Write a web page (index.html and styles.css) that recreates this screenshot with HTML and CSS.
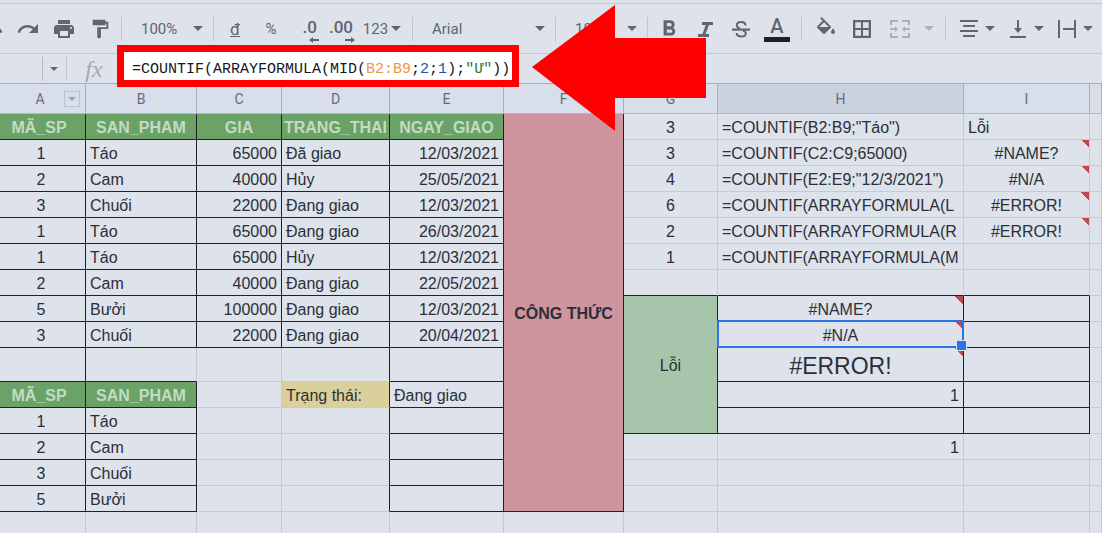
FILE: index.html
```html
<!DOCTYPE html>
<html lang="vi">

<head>
    <meta charset="UTF-8">
    <meta name="viewport" content="width=device-width, initial-scale=1.0">
    <title>COUNTIF</title>
    <link rel="stylesheet" href="styles.css">
</head>

<body>
    <div class="app">
        <!-- Toolbar -->
        <div class="toolbar">
            <button type="button" class="tool tool-cut" aria-label="Undo">
                <svg width="24" height="24" viewBox="0 0 24 24"><path d="M5.6 10.6C7.45 8.99 9.85 8 12.5 8c4.65 0 8.58 3.03 9.96 7.22L20.1 16c-1.05-3.19-4.05-5.5-7.6-5.5-1.95 0-3.73.72-5.12 1.88L11 16H2V7l3.6 3.6z"/></svg>
            </button>
            <button type="button" class="tool" aria-label="Redo">
                <svg width="24" height="24" viewBox="0 0 24 24"><path d="M18.4 10.6C16.55 8.99 14.15 8 11.5 8c-4.65 0-8.58 3.03-9.96 7.22L3.9 16c1.05-3.19 4.05-5.5 7.6-5.5 1.95 0 3.73.72 5.12 1.88L13 16h9V7l-3.6 3.6z"/></svg>
            </button>
            <button type="button" class="tool" aria-label="Print">
                <svg width="24" height="24" viewBox="0 0 24 24"><path d="M19 8H5c-1.66 0-3 1.34-3 3v6h4v4h12v-4h4v-6c0-1.66-1.34-3-3-3zm-3 11H8v-5h8v5zm3-7c-.55 0-1-.45-1-1s.45-1 1-1 1 .45 1 1-.45 1-1 1zm-1-9H6v4h12V3z"/></svg>
            </button>
            <button type="button" class="tool" aria-label="Paint format">
                <svg width="22" height="22" viewBox="0 0 24 24"><path d="M18 4V3c0-.55-.45-1-1-1H5c-.55 0-1 .45-1 1v4c0 .55.45 1 1 1h12c.55 0 1-.45 1-1V6h1v4H9v11c0 .55.45 1 1 1h2c.55 0 1-.45 1-1v-9h8V4h-3z"/></svg>
            </button>
            <span class="sep"></span>
            <div class="dropdown">
                <select aria-label="Zoom">
                    <option>100%</option>
                </select>
            </div>
            <span class="sep"></span>
            <button type="button" class="tool currency"><u>đ</u></button>
            <button type="button" class="tool">%</button>
            <button type="button" class="tool decimal">
                .0
                <svg width="10" height="6" viewBox="0 0 10 6"><path d="M4 0v2h6v2H4v2L0 3z"/></svg>
            </button>
            <button type="button" class="tool decimal">
                .00
                <svg width="10" height="6" viewBox="0 0 10 6"><path d="M6 0v2H0v2h6v2l4-3z"/></svg>
            </button>
            <button type="button" class="tool format caret">123</button>
            <span class="sep"></span>
            <div class="dropdown dropdown-font">
                <select aria-label="Font">
                    <option>Arial</option>
                </select>
            </div>
            <span class="sep"></span>
            <div class="dropdown">
                <select aria-label="Font size">
                    <option>10</option>
                </select>
            </div>
            <span class="sep"></span>
            <button type="button" class="tool" aria-label="Bold">
                <svg width="26" height="26" viewBox="0 0 24 24"><path d="M15.6 10.79c.97-.67 1.65-1.77 1.65-2.79 0-2.26-1.75-4-4-4H7v14h7.04c2.09 0 3.71-1.7 3.71-3.79 0-1.52-.86-2.82-2.15-3.42zM10 6.5h3c.83 0 1.5.67 1.5 1.5s-.67 1.5-1.5 1.5h-3v-3zm3.5 9H10v-3h3.5c.83 0 1.5.67 1.5 1.5s-.67 1.5-1.5 1.5z"/></svg>
            </button>
            <button type="button" class="tool" aria-label="Italic">
                <svg width="24" height="24" viewBox="0 0 24 24"><path d="M9 5v3h3.7L9.4 17H5v3h11v-3h-3.4L15.9 8H20V5z"/></svg>
            </button>
            <button type="button" class="tool" aria-label="Strikethrough">
                <svg width="24" height="24" viewBox="0 0 24 24"><path class="stroke" d="M16.5 8.5C16.5 6.3 14.6 5 12.2 5S7.8 6.3 7.8 8.3c0 1.7 1.2 2.6 3.2 3.3M14 13.5c1.9.6 2.8 1.5 2.8 2.9 0 2-1.9 3.1-4.4 3.1S7.6 18.2 7.600 16"/><path d="M3 11.5h18v2.200H3z"/></svg>
            </button>
            <button type="button" class="tool text-color">A</button>
            <span class="sep sep-wide"></span>
            <button type="button" class="tool" aria-label="Fill color">
                <svg width="24" height="24" viewBox="0 0 24 24"><path d="M16.56 8.94L7.62 0 6.21 1.41l2.38 2.38-5.15 5.15c-.59.59-.59 1.54 0 2.12l5.5 5.5c.29.29.68.44 1.06.44s.77-.15 1.06-.44l5.5-5.5c.59-.58.59-1.53 0-2.12zM5.21 10L10 5.21 14.79 10H5.21zM19 11.5s-2 2.17-2 3.5c0 1.1.9 2 2 2s2-.9 2-2c0-1.33-2-3.5-2-3.5z"/></svg>
            </button>
            <button type="button" class="tool" aria-label="Borders">
                <svg width="24" height="24" viewBox="0 0 24 24"><path fill-rule="evenodd" d="M3 3h18v18H3zM5.3 5.3V11H11V5.3zM13 5.3V11h5.7V5.3zM5.3 13v5.7H11V13zM13 13v5.7h5.7V13z"/></svg>
            </button>
            <button type="button" class="tool merge caret" aria-label="Merge cells">
                <svg width="20" height="20" viewBox="0 0 20 20"><path d="M0 1h8v2H2v3H0zM12 1h8v5h-2V3h-6zM0 14h2v3h6v2H0zM18 14h2v5h-8v-2h6zM0 9h5V7l3 3-3 3v-2H0zM20 9h-5V7l-3 3 3 3v-2h5z"/></svg>
            </button>
            <span class="sep sep-wide"></span>
            <button type="button" class="tool menu caret" aria-label="Horizontal align">
                <svg width="20" height="20" viewBox="0 0 20 20"><path d="M1 1h18v2H1zM4 6h12v2H4zM1 11h18v2H1zM4 16h12v2H4z"/></svg>
            </button>
            <button type="button" class="tool menu caret" aria-label="Vertical align">
                <svg width="20" height="20" viewBox="0 0 20 20"><path d="M9 1h2v8h3l-4 5-4-5h3zM2 17h16v2H2z"/></svg>
            </button>
            <button type="button" class="tool menu caret" aria-label="Text wrapping">
                <svg width="20" height="20" viewBox="0 0 20 20"><path d="M1 1h2v18H1zM17 1h2v18h-2zM6 9h11v2H6z"/></svg>
            </button>
        </div>

        <!-- Formula bar -->
        <div class="formula-bar">
            <button type="button" class="name-box caret" aria-label="Name box"></button>
            <span class="fx">fx</span>
            <div class="formula">
                <code>=COUNTIF(ARRAYFORMULA(MID(<span class="range">B2:B9</span>;<span class="number">2</span>;<span class="number">1</span>);<span class="string">"Ư"</span>))</code>
            </div>
            <svg class="arrow" width="174" height="126" viewBox="0 0 174 126"><path d="M0 62L83 0v33h91v60H83v33z"/></svg>
        </div>

        <!-- Sheet -->
        <table class="sheet">
            <colgroup>
                <col class="col-a">
                <col class="col-b">
                <col class="col-c">
                <col class="col-d">
                <col class="col-e">
                <col class="col-f">
                <col class="col-g">
                <col class="col-h">
                <col class="col-i">
                <col>
            </colgroup>
            <thead>
                <tr>
                    <th>
                        <div class="col-head">
                            <span>A</span>
                            <button type="button" class="filter caret" aria-label="Column A menu"></button>
                        </div>
                    </th>
                    <th>B</th>
                    <th>C</th>
                    <th>D</th>
                    <th>E</th>
                    <th>F</th>
                    <th>G</th>
                    <th class="active">H</th>
                    <th>I</th>
                    <th></th>
                </tr>
            </thead>
            <tbody>
                <tr>
                    <td class="title box">MÃ_SP</td>
                    <td class="title box">SAN_PHAM</td>
                    <td class="title box">GIA</td>
                    <td class="title box">TRANG_THAI</td>
                    <td class="title box">NGAY_GIAO</td>
                    <td class="banner box" rowspan="15">CÔNG THỨC</td>
                    <td class="center">3</td>
                    <td>=COUNTIF(B2:B9;"Táo")</td>
                    <td>Lỗi</td>
                    <td></td>
                </tr>
                <tr>
                    <td class="center box">1</td>
                    <td class="box">Táo</td>
                    <td class="right box">65000</td>
                    <td class="box">Đã giao</td>
                    <td class="right box">12/03/2021</td>
                    <td class="center">3</td>
                    <td>=COUNTIF(C2:C9;65000)</td>
                    <td class="center error">#NAME?</td>
                    <td></td>
                </tr>
                <tr>
                    <td class="center box">2</td>
                    <td class="box">Cam</td>
                    <td class="right box">40000</td>
                    <td class="box">Hủy</td>
                    <td class="right box">25/05/2021</td>
                    <td class="center">4</td>
                    <td>=COUNTIF(E2:E9;"12/3/2021")</td>
                    <td class="center error">#N/A</td>
                    <td></td>
                </tr>
                <tr>
                    <td class="center box">3</td>
                    <td class="box">Chuối</td>
                    <td class="right box">22000</td>
                    <td class="box">Đang giao</td>
                    <td class="right box">12/03/2021</td>
                    <td class="center">6</td>
                    <td>=COUNTIF(ARRAYFORMULA(L</td>
                    <td class="center error">#ERROR!</td>
                    <td></td>
                </tr>
                <tr>
                    <td class="center box">1</td>
                    <td class="box">Táo</td>
                    <td class="right box">65000</td>
                    <td class="box">Đang giao</td>
                    <td class="right box">26/03/2021</td>
                    <td class="center">2</td>
                    <td>=COUNTIF(ARRAYFORMULA(R</td>
                    <td class="center error">#ERROR!</td>
                    <td></td>
                </tr>
                <tr>
                    <td class="center box">1</td>
                    <td class="box">Táo</td>
                    <td class="right box">65000</td>
                    <td class="box">Hủy</td>
                    <td class="right box">12/03/2021</td>
                    <td class="center">1</td>
                    <td>=COUNTIF(ARRAYFORMULA(M</td>
                    <td></td>
                    <td></td>
                </tr>
                <tr>
                    <td class="center box">2</td>
                    <td class="box">Cam</td>
                    <td class="right box">40000</td>
                    <td class="box">Đang giao</td>
                    <td class="right box">22/05/2021</td>
                    <td class="line-bottom"></td>
                    <td class="line-bottom"></td>
                    <td class="line-bottom"></td>
                    <td></td>
                </tr>
                <tr>
                    <td class="center box">5</td>
                    <td class="box">Bưởi</td>
                    <td class="right box">100000</td>
                    <td class="box">Đang giao</td>
                    <td class="right box">12/03/2021</td>
                    <td class="group box" rowspan="5">Lỗi</td>
                    <td class="center error box">#NAME?</td>
                    <td class="box"></td>
                    <td></td>
                </tr>
                <tr>
                    <td class="center box">3</td>
                    <td class="box">Chuối</td>
                    <td class="right box">22000</td>
                    <td class="box">Đang giao</td>
                    <td class="right box">20/04/2021</td>
                    <td class="center error box selected">#N/A</td>
                    <td class="box"></td>
                    <td></td>
                </tr>
                <tr class="tall">
                    <td class="box"></td>
                    <td class="line-bottom"></td>
                    <td></td>
                    <td class="line-right"></td>
                    <td class="box"></td>
                    <td class="center error box large">#ERROR!</td>
                    <td class="box"></td>
                    <td></td>
                </tr>
                <tr>
                    <td class="title box">MÃ_SP</td>
                    <td class="title box">SAN_PHAM</td>
                    <td></td>
                    <td class="status line-right">Trạng thái:</td>
                    <td class="box">Đang giao</td>
                    <td class="right box">1</td>
                    <td class="box"></td>
                    <td></td>
                </tr>
                <tr>
                    <td class="center box">1</td>
                    <td class="box">Táo</td>
                    <td></td>
                    <td class="line-right"></td>
                    <td class="box"></td>
                    <td class="box"></td>
                    <td class="box"></td>
                    <td></td>
                </tr>
                <tr>
                    <td class="center box">2</td>
                    <td class="box">Cam</td>
                    <td></td>
                    <td class="line-right"></td>
                    <td class="box"></td>
                    <td></td>
                    <td class="right">1</td>
                    <td></td>
                    <td></td>
                </tr>
                <tr>
                    <td class="center box">3</td>
                    <td class="box">Chuối</td>
                    <td></td>
                    <td class="line-right"></td>
                    <td class="box"></td>
                    <td></td>
                    <td></td>
                    <td></td>
                    <td></td>
                </tr>
                <tr>
                    <td class="center box">5</td>
                    <td class="box">Bưởi</td>
                    <td></td>
                    <td class="line-right"></td>
                    <td class="box"></td>
                    <td></td>
                    <td></td>
                    <td></td>
                    <td></td>
                </tr>
                <tr>
                    <td></td>
                    <td></td>
                    <td></td>
                    <td></td>
                    <td></td>
                    <td></td>
                    <td></td>
                    <td></td>
                    <td></td>
                    <td></td>
                </tr>
            </tbody>
        </table>
    </div>
</body>

</html>
```

FILE: styles.css
```css
/* Basic Reset */
* {
    margin: 0;
    padding: 0;
    box-sizing: border-box;
}

body {
    font-family: "Liberation Sans", Arial, sans-serif;
    background-color: #dde2eb;
    color: #2b2f39;
}

.app {
    height: 100vh;
    padding-top: 3px;
    overflow: hidden;
}

button,
select {
    border: none;
    background: none;
    color: inherit;
    font: inherit;
    cursor: pointer;
}

/* Toolbar */
.toolbar {
    display: flex;
    align-items: center;
    height: 51px;
    border-top: 1px solid #c3c8d1;
    border-bottom: 1px solid #c3c8d1;
    color: #5f6571;
    font-family: Roboto, sans-serif;
    font-size: 15px;
}

.tool {
    display: flex;
    flex: none;
    align-items: center;
    justify-content: center;
    width: 36px;
    height: 40px;
}

.tool svg {
    flex: none;
    fill: currentColor;
}

.tool .stroke {
    fill: none;
    stroke: currentColor;
    stroke-width: 2;
}

.tool-cut {
    justify-content: flex-end;
    width: 10px;
    overflow: hidden;
}

.tool-cut svg {
    margin-right: 6px;
}

.sep {
    flex: none;
    width: 1px;
    height: 24px;
    margin: 0 3px;
    background-color: #c0c5ce;
}

.sep-wide {
    margin: 0 6px;
}

.caret::after,
.dropdown::after {
    content: "";
    border: 5px solid transparent;
    border-top-color: #5f6571;
    border-bottom: none;
}

.dropdown {
    display: grid;
    flex: none;
    align-items: center;
    width: 85px;
    height: 40px;
}

.dropdown-font {
    width: 136px;
}

.dropdown select,
.dropdown::after {
    grid-area: 1 / 1;
}

.dropdown::after {
    justify-self: end;
    margin-right: 7px;
    pointer-events: none;
}

.dropdown select {
    appearance: none;
    width: 100%;
    padding-left: 16px;
}

.currency {
    font-size: 17px;
}

.decimal {
    flex-direction: column;
    align-items: flex-end;
    padding: 2px 8px 0 0;
    font-size: 17px;
    font-weight: 500;
    line-height: 20px;
}

.decimal svg {
    margin-right: -2px;
}

.format {
    gap: 3px;
    width: 48px;
    padding-right: 6px;
}

.text-color {
    flex-direction: column;
    font-size: 20px;
    font-weight: 500;
    line-height: 21px;
}

.text-color::after {
    content: "";
    width: 26px;
    height: 5px;
    background-color: #1c2029;
}

.merge {
    justify-content: space-between;
    width: 59px;
    padding: 0 5px 0 10px;
    opacity: 0.4;
}

.menu {
    gap: 6px;
    width: 49px;
}

/* Formula bar */
.formula-bar {
    position: relative;
    display: flex;
    align-items: center;
    height: 30px;
    border-bottom: 1px solid #a9afba;
}

.name-box {
    display: flex;
    align-items: center;
    justify-content: flex-end;
    width: 67px;
    height: 24px;
    padding-right: 8px;
    border-right: 1px solid #c0c5ce;
    background: linear-gradient(#b4bac5, #b4bac5) no-repeat 42px 0 / 1px 100%;
}

.name-box::after {
    border-width: 4px;
    border-bottom: none;
}

.fx {
    width: 50px;
    padding-left: 4px;
    color: #a5aab4;
    font-family: "Liberation Serif", serif;
    font-size: 24px;
    font-style: italic;
    line-height: 24px;
    text-align: center;
}

.formula {
    position: relative;
    padding: 0 9px 0 15px;
    line-height: 29px;
}

.formula code {
    position: relative;
    z-index: 2;
    color: #15171c;
    font-family: "Liberation Mono", monospace;
    font-size: 15px;
}

/* Red frame around the formula */
.formula::before {
    content: "";
    position: absolute;
    inset: -8px 0 -3px;
    z-index: 1;
    border: 7px solid #fe0000;
    background-color: #fff;
}

.range {
    color: #f0953f;
}

.number {
    color: #2a4fa8;
}

.string {
    color: #2c7a36;
}

.arrow {
    position: absolute;
    top: -49px;
    left: 532px;
    z-index: 1;
    fill: #fe0000;
}

/* Sheet */
.sheet {
    width: 100%;
    table-layout: fixed;
    border-collapse: separate;
    border-spacing: 0;
    font-size: 16px;
    line-height: 20px;
}

.col-a {
    width: 86px;
}

.col-b {
    width: 111px;
}

.col-c {
    width: 85px;
}

.col-d {
    width: 108px;
}

.col-e {
    width: 114px;
}

.col-f {
    width: 120px;
}

.col-g {
    width: 94px;
}

.col-h {
    width: 246px;
}

.col-i {
    width: 126px;
}

.sheet th {
    height: 30px;
    border-right: 1px solid #a9afba;
    border-bottom: 1px solid #b4bac5;
    background-color: #d8dfea;
    color: #666c78;
    font-family: Roboto, sans-serif;
    font-size: 14px;
    font-weight: 400;
}

.sheet th.active {
    background-color: #cbd2df;
}

.col-head {
    display: grid;
    grid-template-columns: 1fr auto 1fr;
    align-items: center;
    padding-right: 5px;
}

.col-head span {
    grid-column: 2;
}

.filter {
    display: flex;
    align-items: center;
    justify-content: center;
    justify-self: end;
    width: 16px;
    height: 16px;
    border: 1px solid #bcc2cd;
}

.filter::after {
    border-width: 4px;
    border-top-color: #9aa0ac;
    border-bottom: none;
}

.sheet td {
    height: 26px;
    padding: 2px 4px 0;
    border-right: 1px solid #c5cad4;
    border-bottom: 1px solid #c5cad4;
    overflow: hidden;
    white-space: nowrap;
}

.sheet .tall td {
    height: 34px;
}

.sheet .box {
    border-color: #1d212a;
}

.sheet .line-right {
    border-right-color: #1d212a;
}

.sheet .line-bottom {
    border-bottom-color: #1d212a;
}

.center {
    text-align: center;
}

.right {
    text-align: right;
}

.sheet .title {
    padding: 2px 0 0;
    background-color: #6ba267;
    color: #c2dcc4;
    font-weight: bold;
    text-align: center;
}

/* The first column is scrolled slightly out of view */
.sheet td:first-child {
    padding-right: 7px;
}

.banner {
    background-color: #ce959e;
    font-weight: bold;
    text-align: center;
}

.group {
    background-color: #a7c5aa;
    text-align: center;
}

.status {
    background-color: #dbcf9b;
}

.large {
    font-size: 23px;
    line-height: 24px;
}

/* Red note corner */
.error {
    background: linear-gradient(to bottom left, #c2484b 50%, transparent 50%) no-repeat top right / 8px 8px;
}

/* Selected cell */
.sheet .selected {
    position: relative;
    overflow: visible;
}

.selected::before {
    content: "";
    position: absolute;
    inset: -2px -1px -1px;
    border: 2px solid #2a74e4;
}

.selected::after {
    content: "";
    position: absolute;
    right: -4px;
    bottom: -4px;
    width: 9px;
    height: 9px;
    border: 1px solid #dde2eb;
    background-color: #2a74e4;
}
```
